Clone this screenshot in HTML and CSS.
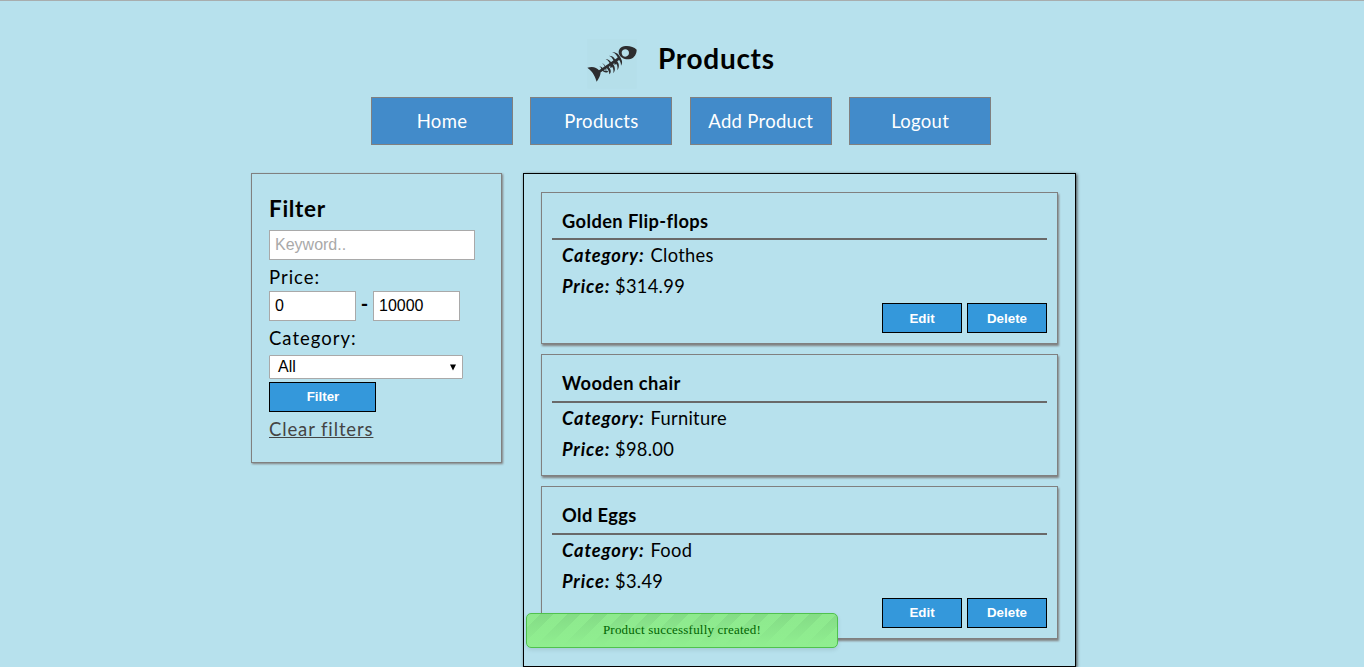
FILE: index.html
```html
<!DOCTYPE html>
<html lang="en">
<head>
<meta charset="utf-8">
<title>Products</title>
<link rel="stylesheet" href="styles.css">
</head>
<body>
<header class="header">
  <svg class="logo" viewBox="0 0 150 150">
    <rect class="logo-tile" x="1" y="0" width="148" height="149"/>
    <g class="bone">
      <path fill-rule="evenodd" d="M96 45C92 33 101 22 116 21C128 20 141 24 149 32C149 44 143 56 130 60C115 63 100 57 96 45ZM104 41C104 48 109 53 115 53C121 53 126 48 126 42C126 35 121 31 115 31C109 31 104 35 104 41Z"/>
      <path d="M1 86C17 81 29 85 36 94L98 52L102 59L41 100C40 110 36 119 29 128C25 116 20 99 1 86Z"/>
      <path d="M45 72C52 77 56 85 56 96C58 105 58 101 57 99C61 91 55 76 45 72ZM56 60C66 65 71 75 70 87L76 84C75 70 68 61 56 60ZM66 50C76 54 81 64 83 78L88 74C87 60 79 50 66 50ZM75 40C85 42 91 50 94 62L100 58C97 46 88 39 75 40ZM37 82C43 86 44 91 43 98L48 94C49 88 44 83 37 82Z"/>
      <path d="M47 92C54 96 58 97 61 95L64 99C56 102 48 99 45 94ZM57 85C64 93 67 98 67 106C75 100 71 89 63 82ZM70 77C78 84 81 92 79 103C87 94 84 81 76 73ZM82 68C90 75 93 81 91 94C99 83 96 72 88 64ZM93 60C99 65 102 71 102 80C108 71 105 61 99 56Z"/>
    </g>
  </svg>
  <h1 class="title">Products</h1>
</header>
<nav class="nav">
  <a class="nav-link">Home</a>
  <a class="nav-link">Products</a>
  <a class="nav-link">Add Product</a>
  <a class="nav-link">Logout</a>
</nav>
<main class="main">
  <form class="filter">
    <h2 class="filter-title">Filter</h2>
    <input class="field keyword" type="text" placeholder="Keyword..">
    <label class="label">Price:</label>
    <div class="range">
      <input class="field price" type="text" value="0">
      <span class="dash">-</span>
      <input class="field price" type="text" value="10000">
    </div>
    <label class="label category-label">Category:</label>
    <div class="select"><span>All</span><svg class="arrow" viewBox="0 0 6 7"><path d="M0 0.5H6L3 6.5Z"/></svg></div>
    <button class="button filter-button" type="button">Filter</button>
    <a class="clear">Clear filters</a>
  </form>
  <section class="products">
    <article class="card">
      <h3 class="name">Golden Flip-flops</h3>
      <div class="details">
        <p class="row"><b class="key key-category">Category:</b><span>Clothes</span></p>
        <p class="row"><b class="key key-price">Price:</b><span>$314.99</span></p>
      </div>
      <div class="actions"><button class="button">Edit</button><button class="button">Delete</button></div>
    </article>
    <article class="card">
      <h3 class="name">Wooden chair</h3>
      <div class="details">
        <p class="row"><b class="key key-category">Category:</b><span>Furniture</span></p>
        <p class="row"><b class="key key-price">Price:</b><span>$98.00</span></p>
      </div>
    </article>
    <article class="card">
      <h3 class="name">Old Eggs</h3>
      <div class="details">
        <p class="row"><b class="key key-category">Category:</b><span>Food</span></p>
        <p class="row"><b class="key key-price">Price:</b><span>$3.49</span></p>
      </div>
      <div class="actions"><button class="button">Edit</button><button class="button">Delete</button></div>
    </article>
  </section>
</main>
<div class="toast">Product successfully created!</div>
</body>
</html>
```
FILE: styles.css
```css
* { box-sizing: border-box; }
body {
  margin: 0;
  height: 667px;
  overflow: hidden;
  border-top: 1px solid #a8adae;
  background: #b7e1ed;
  font-family: Lato, "Liberation Sans", sans-serif;
  color: #000;
}
h1, h2, h3, p { margin: 0; }
.header { display: flex; height: 96px; padding: 38px 0 0 587px; }
.logo { width: 50px; height: 50px; }
.logo-tile { fill: #b5dfea; }
.bone { fill: #2d2d2f; }
.title { margin-left: 21px; font-size: 28px; line-height: 39px; font-weight: 700; letter-spacing: 0.7px; }
.nav { display: flex; gap: 17.4px; padding-left: 371px; }
.nav-link {
  width: 142px;
  height: 48px;
  border: 1px solid #808080;
  background: #428bca;
  color: #fff;
  font-size: 18.5px;
  line-height: 47px;
  letter-spacing: 0.3px;
  text-align: center;
}
.main { display: flex; align-items: flex-start; gap: 21px; padding: 28px 0 0 251px; }
.filter {
  width: 251px;
  height: 290px;
  padding: 20px 17px 0;
  border: 1px solid #808080;
  box-shadow: 1px 1px 2px #808080;
  display: flex;
  flex-direction: column;
  align-items: flex-start;
}
.filter-title { font-size: 22.5px; line-height: 30px; height: 36px; letter-spacing: 0.7px; }
.field {
  border: 1px solid #a9a9a9;
  background: #fff;
  height: 30px;
  padding: 0 5px;
  font: 16px "Liberation Sans", Arial, sans-serif;
  color: #000;
}
.field::placeholder { color: #a9a9a9; }
.keyword { width: 206px; }
.label { font-size: 18.5px; letter-spacing: 1px; height: 31px; line-height: 34px; }
.range { display: flex; }
.price { width: 87px; }
.dash { width: 17px; text-align: center; font-size: 20px; line-height: 25px; font-weight: 700; }
.category-label { height: 34px; line-height: 35px; }
.select {
  width: 194px;
  height: 24px;
  border: 1px solid #a9a9a9;
  border-radius: 1px;
  background: #fff;
  padding: 0 6px 0 8px;
  display: flex;
  align-items: center;
  justify-content: space-between;
  font: 16px "Liberation Sans", Arial, sans-serif;
}
.arrow { width: 6px; height: 7px; }
.button {
  width: 80px;
  height: 30px;
  padding: 0;
  border: 1px solid #000;
  background: #3498db;
  color: #fff;
  font: bold 13.333px "Liberation Sans", Arial, sans-serif;
}
.filter-button { width: 107px; margin-top: 3px; padding: 0 0 2px 1px; }
.clear {
  margin-top: 5px;
  font-size: 18.5px;
  line-height: 25px;
  letter-spacing: 0.87px;
  color: #444;
  text-decoration: underline;
}
.products {
  width: 553px;
  height: 494px;
  padding: 18px 17px;
  border: 1px solid #000;
  box-shadow: 1px 1px 3px #444;
  display: flex;
  flex-direction: column;
  gap: 10px;
}
.card {
  padding: 0 10px 9.75px;
  border: 1px solid #808080;
  box-shadow: 1px 2px 2px #808080;
}
.name {
  height: 47.45px;
  padding: 16px 10px 0;
  border-bottom: 2px solid #696969;
  font-size: 18.3px;
  line-height: 24px;
  letter-spacing: 0.4px;
}
.details { height: 63px; padding-left: 10px; }
.row { height: 31px; line-height: 30px; font-size: 18.3px; letter-spacing: 0.3px; display: flex; }
.key { font-style: italic; font-weight: 700; letter-spacing: 0.85px; }
.key-category { width: 88.5px; }
.key-price { width: 53px; }
.actions { display: flex; justify-content: flex-end; gap: 5px; }
.toast {
  position: absolute;
  left: 526px;
  top: 613px;
  width: 312px;
  height: 35px;
  border: 1px solid #50c24e;
  border-radius: 5px;
  background: linear-gradient(rgba(144,238,144,0), #90ee90 95%), repeating-linear-gradient(135deg, #8ee98e 0 9.5px, #84dc86 9.5px 19px);
  box-shadow: 0 2px 4px rgba(0,0,0,0.1);
  color: #006400;
  font: 13px/32px "Liberation Serif", "Times New Roman", serif;
  letter-spacing: 0.2px;
  text-align: center;
}
```
